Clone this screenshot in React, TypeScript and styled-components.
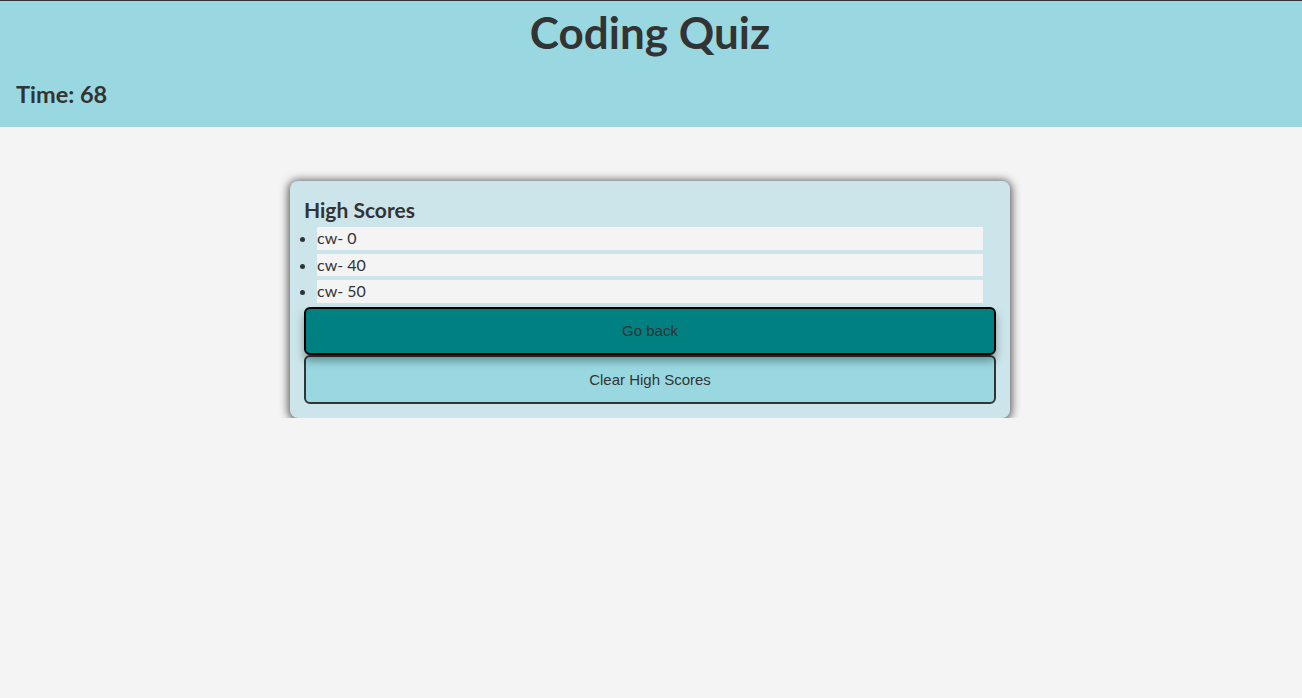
import React from "react";
import styled, { createGlobalStyle } from "styled-components";

const Global = createGlobalStyle`
  html, body { margin: 0; padding: 0; background: #f4f4f4; }
  body { font-family: "Liberation Sans", Arial, sans-serif; color: #333; }
`;

const Header = styled.header`
  background: #99d8e0;
  border-top: 1px solid #333;
  height: 126px;
  display: flex;
  flex-direction: column;
`;

const Title = styled.h1`
  margin: 0;
  padding-top: 4px;
  padding-right: 2px;
  text-align: center;
  font-family: Lato, "Open Sans", sans-serif;
  font-weight: 700;
  font-size: 44px;
  line-height: 54px;
  color: #333;
`;

const Timer = styled.div`
  margin-top: 22px;
  padding-left: 16px;
  font-family: Lato, "Open Sans", sans-serif;
  font-weight: 700;
  font-size: 23.5px;
  line-height: 26px;
  color: #333;
`;

const Main = styled.main`
  display: flex;
  justify-content: center;
  padding-top: 54px;
  padding-right: 2px;
`;

const Card = styled.section`
  width: 720px;
  box-sizing: border-box;
  background: #cce5ea;
  border-radius: 8px;
  box-shadow: 0 1px 8px 2px rgba(0, 0, 0, 0.62);
  padding: 17px 14px 14px;
`;

const CardTitle = styled.h2`
  margin: 0;
  font-family: Lato, "Open Sans", sans-serif;
  font-weight: 700;
  font-size: 21px;
  line-height: 24px;
  color: #333;
`;

const List = styled.ul`
  margin: 5px 0 4px;
  padding: 0 13px;
  display: flex;
  flex-direction: column;
  gap: 4px;
`;

const Item = styled.li`
  background: #f4f4f4;
  height: 22.5px;
  line-height: 22px;
  font-family: Lato, "Open Sans", sans-serif;
  font-size: 16px;
  color: #333;
  &::marker { font-size: 16px; }
`;

const Button = styled.button<{ $primary?: boolean }>`
  display: block;
  width: 100%;
  height: ${(p) => (p.$primary ? "48px" : "49px")};
  box-sizing: border-box;
  border-radius: 6px;
  border: 2px solid ${(p) => (p.$primary ? "#000" : "#333")};
  background: ${(p) => (p.$primary ? "#008080" : "#99d8e0")};
  color: #333;
  font-family: "Liberation Sans", Arial, sans-serif;
  font-size: 15px;
  box-shadow: ${(p) => (p.$primary ? "0 6px 8px rgba(0,0,0,0.35)" : "none")};
  position: relative;
  z-index: ${(p) => (p.$primary ? 1 : 0)};
`;

const Buttons = styled.div`
  display: flex;
  flex-direction: column;
`;

export default function App() {
  const scores = ["cw- 0", "cw- 40", "cw- 50"];
  return (
    <>
      <Global />
      <Header>
        <Title>Coding Quiz</Title>
        <Timer>Time: 68</Timer>
      </Header>
      <Main>
        <Card>
          <CardTitle>High Scores</CardTitle>
          <List>
            {scores.map((s) => (
              <Item key={s}>{s}</Item>
            ))}
          </List>
          <Buttons>
            <Button $primary>Go back</Button>
            <Button>Clear High Scores</Button>
          </Buttons>
        </Card>
      </Main>
    </>
  );
}
